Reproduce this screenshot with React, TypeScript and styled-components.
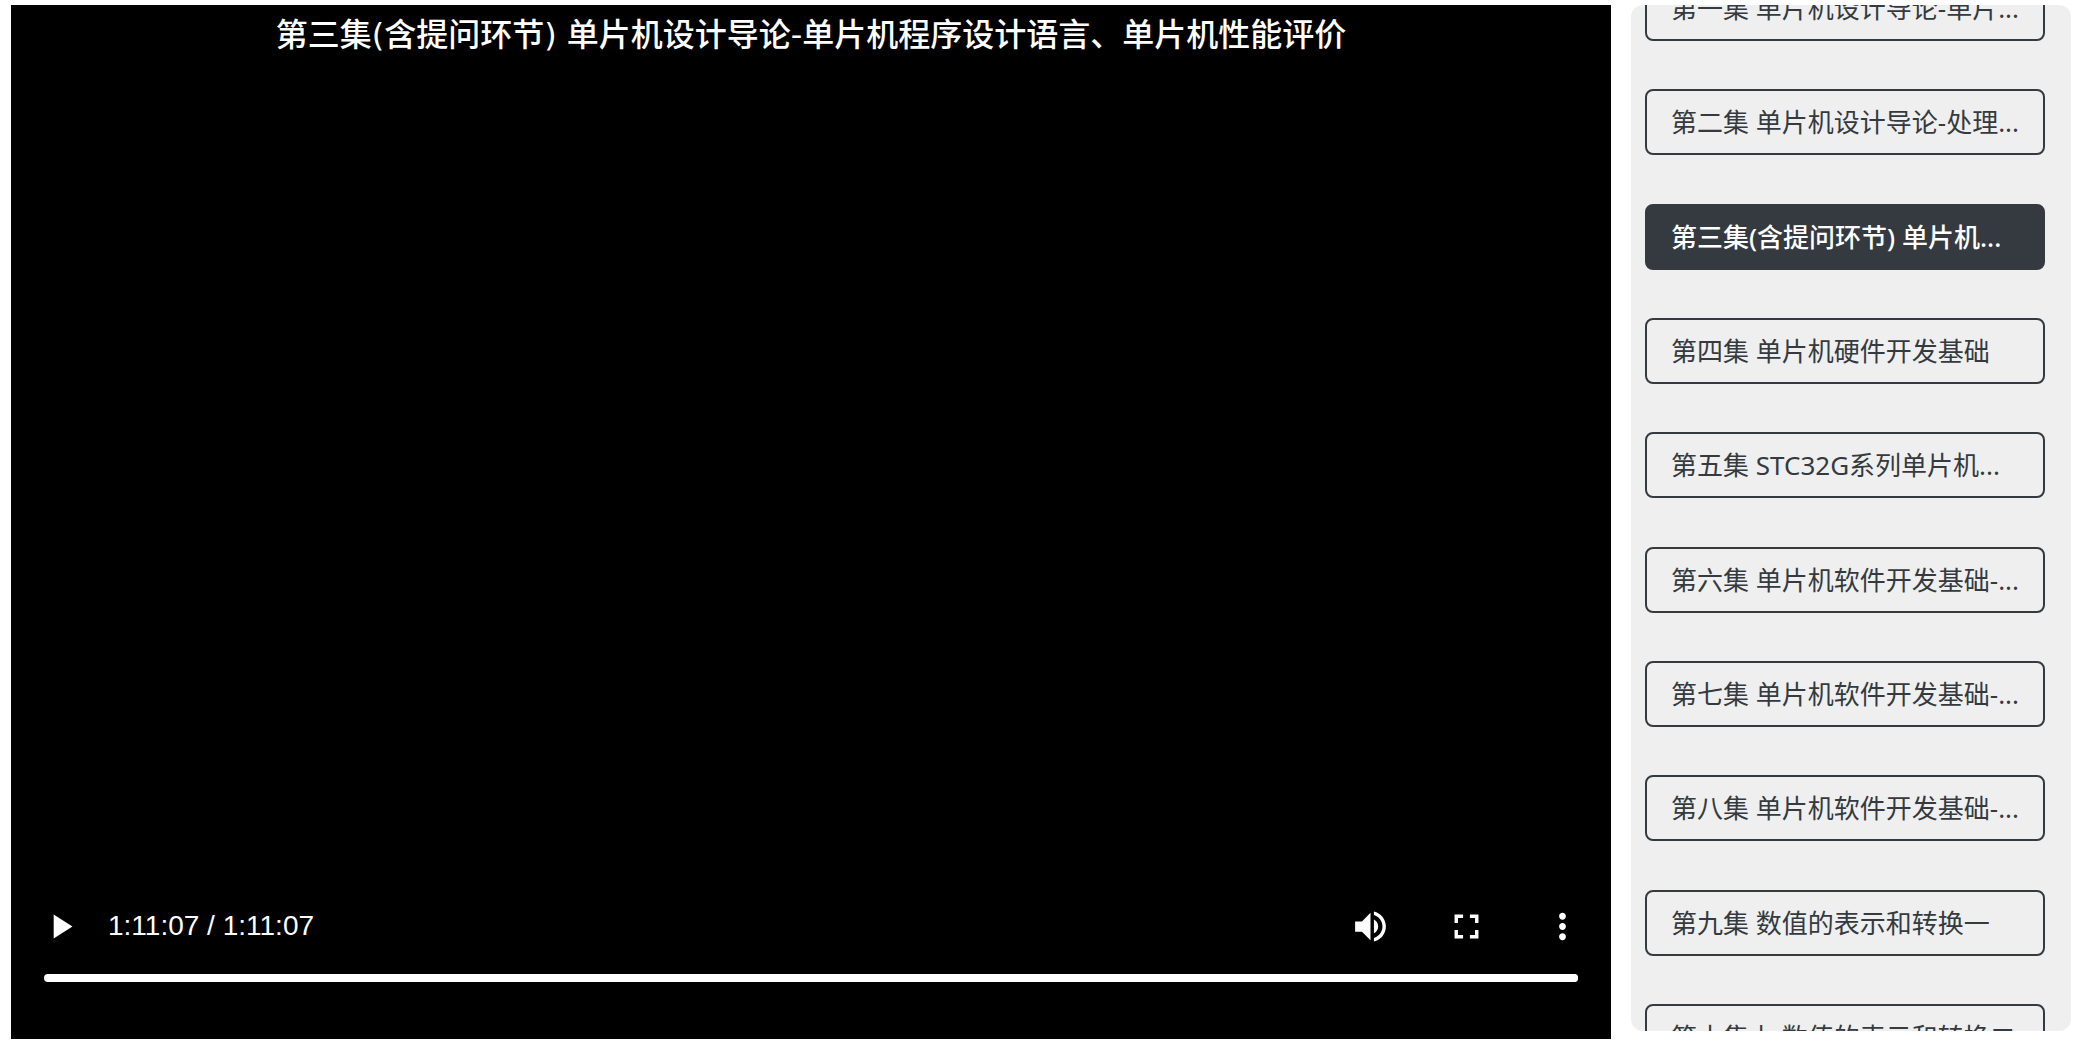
import React, { useState } from "react";
import styled, { createGlobalStyle } from "styled-components";

const GlobalStyle = createGlobalStyle`
  *, *::before, *::after { box-sizing: border-box; }
  body {
    margin: 0;
    background: #fff;
    font-family: "Noto Sans", "Noto Sans CJK SC", sans-serif;
  }
`;

const Page = styled.main`
  display: flex;
  gap: 20px;
  height: 100vh;
  padding: 5px 19px 9px 11px;
`;

const Player = styled.section`
  flex: 1;
  min-width: 0;
  display: flex;
  flex-direction: column;
  background: #000;
  color: #fff;
`;

const Title = styled.h1`
  margin: 0;
  padding-top: 6px;
  font-family: "DejaVu Sans", "Noto Sans CJK SC", sans-serif;
  font-size: 32px;
  line-height: 48px;
  font-weight: 500;
  text-align: center;
`;

const Controls = styled.div`
  display: flex;
  align-items: center;
  margin-top: auto;
  padding: 0 1px;
`;

const Time = styled.span`
  flex: 1;
  font-family: "Liberation Sans", Arial, sans-serif;
  font-size: 28px;
  line-height: 32px;
`;

const IconButton = styled.button`
  display: flex;
  align-items: center;
  justify-content: center;
  width: 96px;
  height: 96px;
  padding: 0;
  border: 0;
  background: none;
  color: inherit;
  cursor: pointer;

  svg {
    width: 41px;
    height: 41px;
    fill: currentColor;
  }
`;

const Progress = styled.input`
  appearance: none;
  height: 8px;
  margin: 0 33px 57px;
  border-radius: 4px;
  background: #fff;
  cursor: pointer;

  &::-webkit-slider-thumb {
    appearance: none;
    width: 8px;
    height: 8px;
    border-radius: 4px;
    background: #fff;
  }
`;

const Sidebar = styled.nav`
  flex: 0 0 440px;
  margin-bottom: 8px;
  padding: 0 26px 0 14px;
  border-radius: 12px;
  background: #efefef;
  overflow: hidden;
`;

const EpisodeList = styled.ul`
  display: flex;
  flex-direction: column;
  justify-content: space-between;
  height: calc(100% + 69px);
  margin: -30px 0 0;
  padding: 0;
  list-style: none;
`;

const EpisodeButton = styled.button<{ $active: boolean }>`
  display: block;
  width: 100%;
  padding: 12px 24px;
  border: 2px solid #343a40;
  border-radius: 8px;
  background: ${(p) => (p.$active ? "#343a40" : "transparent")};
  color: ${(p) => (p.$active ? "#fff" : "#343a40")};
  font-family: inherit;
  font-size: 26px;
  font-weight: ${(p) => (p.$active ? 500 : 400)};
  line-height: 38px;
  text-align: left;
  white-space: nowrap;
  cursor: pointer;
`;

const episodes = [
  "第一集 单片机设计导论-单片...",
  "第二集 单片机设计导论-处理...",
  "第三集(含提问环节) 单片机...",
  "第四集 单片机硬件开发基础",
  "第五集 STC32G系列单片机...",
  "第六集 单片机软件开发基础-...",
  "第七集 单片机软件开发基础-...",
  "第八集 单片机软件开发基础-...",
  "第九集 数值的表示和转换一",
  "第十集上 数值的表示和转换二",
];

const icons = {
  play: "M8 5v14l11-7z",
  volume:
    "M3 9v6h4l5 5V4L7 9H3zm13.5 3c0-1.77-1.02-3.29-2.5-4.03v8.05c1.48-.73 2.5-2.25 2.5-4.02zM14 3.23v2.06c2.89.86 5 3.54 5 6.71s-2.11 5.85-5 6.71v2.06c4.01-.91 7-4.49 7-8.77s-2.99-7.86-7-8.77z",
  fullscreen:
    "M7 14H5v5h5v-2H7v-3zm-2-4h2V7h3V5H5v5zm12 7h-3v2h5v-5h-2v3zM14 5v2h3v3h2V5h-5z",
  more: "M12 8c1.1 0 2-.9 2-2s-.9-2-2-2-2 .9-2 2 .9 2 2 2zm0 2c-1.1 0-2 .9-2 2s.9 2 2 2 2-.9 2-2-.9-2-2-2zm0 6c-1.1 0-2 .9-2 2s.9 2 2 2 2-.9 2-2-.9-2-2-2z",
};

function ControlButton({ icon, label }: { icon: keyof typeof icons; label: string }) {
  return (
    <IconButton type="button" aria-label={label}>
      <svg viewBox="0 0 24 24" aria-hidden="true">
        <path d={icons[icon]} />
      </svg>
    </IconButton>
  );
}

export default function App() {
  const [active, setActive] = useState(2);

  return (
    <>
      <GlobalStyle />
      <Page>
        <Player>
          <Title>第三集(含提问环节) 单片机设计导论-单片机程序设计语言、单片机性能评价</Title>
          <Controls>
            <ControlButton icon="play" label="播放" />
            <Time>1:11:07 / 1:11:07</Time>
            <ControlButton icon="volume" label="静音" />
            <ControlButton icon="fullscreen" label="全屏" />
            <ControlButton icon="more" label="更多选项" />
          </Controls>
          <Progress type="range" aria-label="播放进度" min={0} max={4267} defaultValue={4267} />
        </Player>
        <Sidebar aria-label="选集">
          <EpisodeList>
            {episodes.map((name, i) => (
              <li key={name}>
                <EpisodeButton
                  type="button"
                  $active={i === active}
                  aria-pressed={i === active}
                  onClick={() => setActive(i)}
                >
                  {name}
                </EpisodeButton>
              </li>
            ))}
          </EpisodeList>
        </Sidebar>
      </Page>
    </>
  );
}
